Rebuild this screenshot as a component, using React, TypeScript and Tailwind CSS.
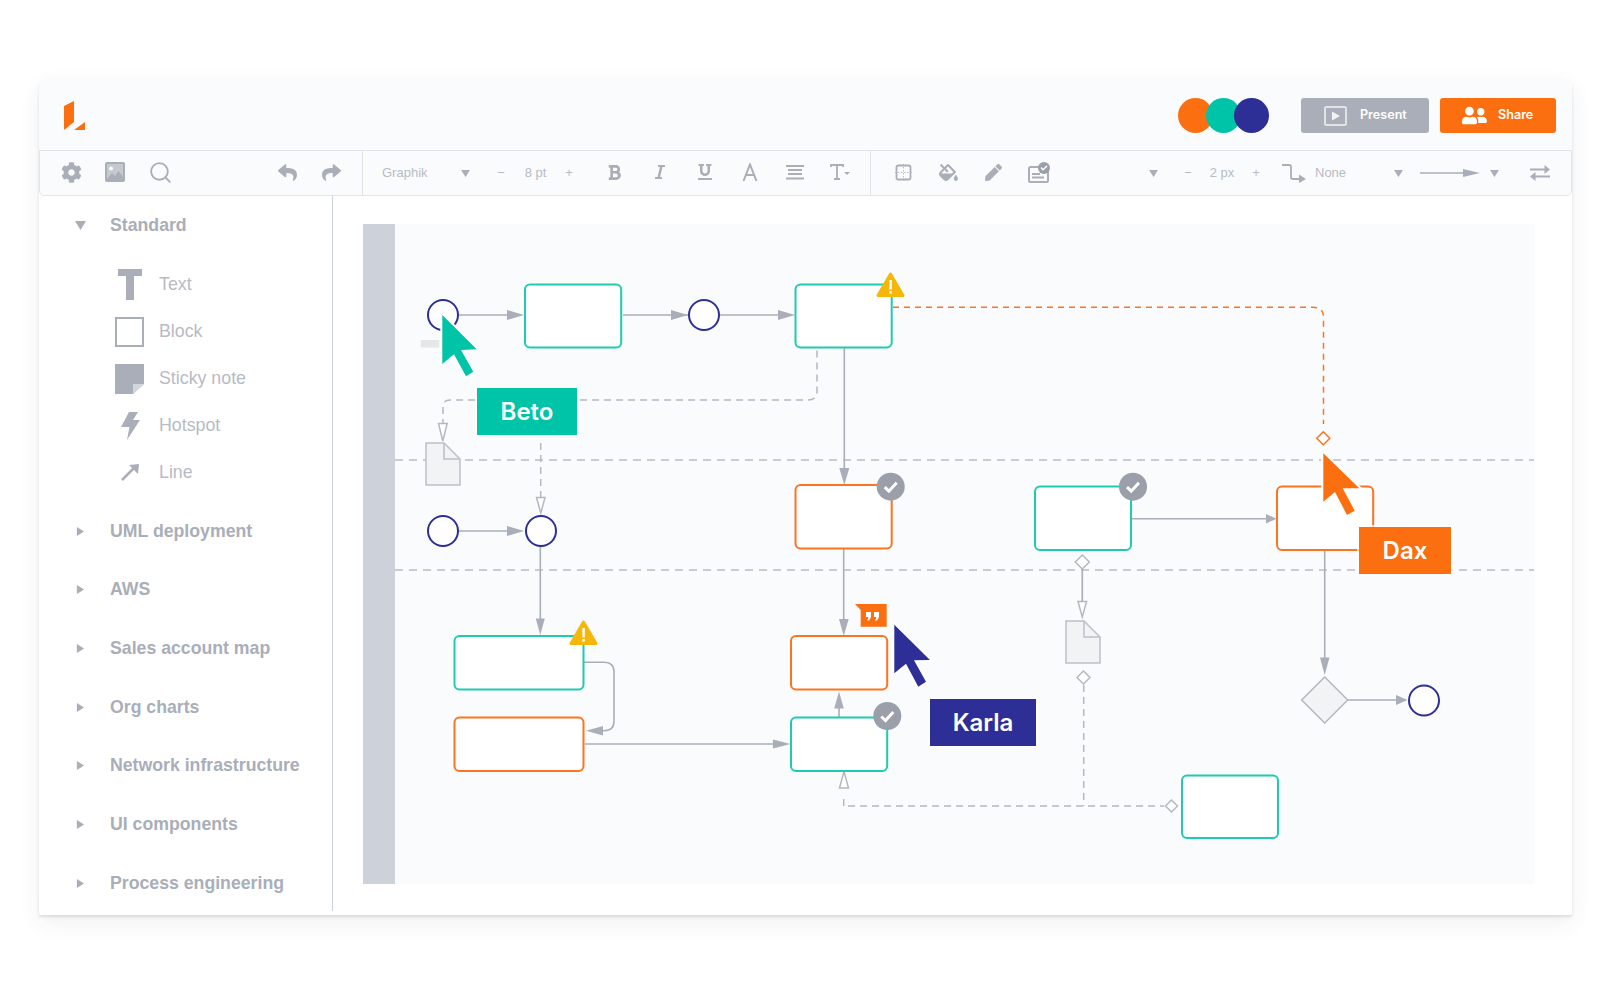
import React from 'react';
import { FaBold, FaCheck, FaCog, FaItalic, FaPen, FaReply, FaShare, FaUnderline, FaUserFriends, FaFillDrip } from 'react-icons/fa';
import { Search } from 'lucide-react';

const TEAL = '#1fcbb0';
const ORANGE = '#fb7420';
const NAVY = '#2d2f96';
const GRAY = '#a9aeb8';

const collapsed = ['UML deployment', 'AWS', 'Sales account map', 'Org charts', 'Network infrastructure', 'UI components', 'Process engineering'];

const rects = [
  { x: 525, y: 284.5, w: 96.2, h: 63, c: TEAL },
  { x: 795.5, y: 284.5, w: 96.2, h: 63, c: TEAL },
  { x: 795.5, y: 485, w: 96.2, h: 63.5, c: ORANGE },
  { x: 791, y: 636, w: 96.2, h: 53.5, c: ORANGE },
  { x: 791, y: 717.5, w: 96.2, h: 53.5, c: TEAL },
  { x: 1035, y: 486.5, w: 96, h: 63.5, c: TEAL },
  { x: 1277, y: 486.5, w: 96.2, h: 63.5, c: ORANGE },
  { x: 1182, y: 775.5, w: 96, h: 62.5, c: TEAL },
  { x: 454.5, y: 636, w: 129, h: 53.5, c: TEAL },
  { x: 454.5, y: 717.5, w: 129, h: 53.5, c: ORANGE },
];

const circles = [
  [443, 315],
  [704, 315],
  [443, 531],
  [541, 531],
  [1424, 700.5],
];

const solid = [
  'M459 315H510',
  'M623 315H688',
  'M720 315H780',
  'M844.3 348V470',
  'M458 531H510',
  'M540.3 546V622',
  'M843.7 549V622',
  'M839 708V717',
  'M1132 518.7H1268',
  'M1324.7 550V660',
  'M1347 700H1397',
  'M1082.3 569V603',
  'M584 662.3H604Q614 662.3 614 672V721Q614 730.7 604 730.7H600',
  'M585 744H775',
];

const filledArrows = [
  '524,315 507,310 507,320',
  '688,315 671,310 671,320',
  '795,315 778,310 778,320',
  '844.3,485 839.3,468 849.3,468',
  '524,531 507,526 507,536',
  '540.3,635 535.8,618.5 544.8,618.5',
  '843.7,636 839,619 848.7,619',
  '839,691.5 834.2,708.5 843.8,708.5',
  '790.5,744 773,739.5 773,748.5',
  '1276.5,518.7 1266,514 1266,523.5',
  '1324.7,675 1320,657.5 1329.5,657.5',
  '1407.5,700 1396,695 1396,705',
  '586,730.7 603,726 603,735.5',
];

const hollowArrows = [
  '442.8,441 438.5,423.5 447.2,423.5',
  '540.8,513 536.5,497.5 545,497.5',
  '1082.3,617 1078,601.5 1086.6,601.5',
  '844,771.5 839.5,788 848.5,788',
];

const checks = [
  [890.7, 486.7],
  [887.3, 716],
  [1133, 486.7],
];

const warnings = [
  [890.5, 272],
  [583.5, 620],
];

const Tri = ({ right = false, size = 9 }: { right?: boolean; size?: number }) => (
  <svg width={size} height={size} viewBox="0 0 10 10" className="shrink-0">
    <polygon points={right ? '1,0 9,5 1,10' : '0,1 10,1 5,9'} fill={GRAY} />
  </svg>
);

const Slot = ({ children }: { children: React.ReactNode }) => (
  <div className="w-[45px] shrink-0 flex items-center justify-center pb-[2px] text-[#a9aeb8]">{children}</div>
);

const Warning = ({ x, y }: { x: number; y: number }) => (
  <g transform={`translate(${x} ${y})`}>
    <path d="M14.5 2 L27 23.5 H2 Z" fill="#f4b70a" stroke="#f4b70a" strokeWidth="3" strokeLinejoin="round" />
    <rect x="13.4" y="8" width="2.4" height="9.5" fill="#fff" />
    <rect x="13.4" y="19" width="2.4" height="2.6" fill="#fff" />
  </g>
);

const Doc = ({ x, y }: { x: number; y: number }) => (
  <g transform={`translate(${x} ${y})`}>
    <path d="M0 0H18L34 16V42H0Z" fill="#f2f3f4" stroke="#bcc0c8" strokeWidth="1.5" />
    <path d="M18 0V16H34" fill="none" stroke="#bcc0c8" strokeWidth="1.5" />
  </g>
);

const Diamond = ({ x, y, r = 7, c = '#b4b8c1' }: { x: number; y: number; r?: number; c?: string }) => (
  <polygon points={`${x},${y - r} ${x + r},${y} ${x},${y + r} ${x - r},${y}`} fill="#fff" stroke={c} strokeWidth="1.5" />
);

const Cursor = ({ points, color }: { points: string; color: string }) => (
  <polygon points={points} fill={color} stroke="#fff" strokeWidth="4" strokeLinejoin="miter" paintOrder="stroke" />
);

const Tag = ({ name, className }: { name: string; className: string }) => (
  <div className={`absolute flex items-center justify-center text-white text-[24px] font-semibold font-['Inter',sans-serif] shadow-[0_0_0_2px_rgba(255,255,255,0.7)] ${className}`}>
    {name}
  </div>
);

const Diagram = () => (
  <svg className="absolute inset-0" width="1172" height="660" viewBox="363 224 1172 660" fill="none">
    {/* swim lanes */}
    <path d="M395 460H1534M395 570H1534" stroke="#b9bdc6" strokeWidth="1.5" strokeDasharray="8 6" />

    {/* connectors */}
    <path d="M475 400H450Q443 400 443 407V424M580 400H808Q817 400 817 391V349M540.7 443V498M843.7 806V796M848 806H1164M1083.7 685V806" stroke="#b4b8c1" strokeWidth="1.5" strokeDasharray="7 5" />
    <path d="M893 307.3H1313Q1323.5 307.3 1323.5 317V424" stroke={ORANGE} strokeWidth="1.5" strokeDasharray="6 5" />
    {solid.map((d) => (
      <path key={d} d={d} stroke={GRAY} strokeWidth="1.6" />
    ))}
    {filledArrows.map((p) => (
      <polygon key={p} points={p} fill={GRAY} />
    ))}
    {hollowArrows.map((p) => (
      <polygon key={p} points={p} fill="#fff" stroke="#b4b8c1" strokeWidth="1.5" />
    ))}

    {/* blocks */}
    {rects.map((r) => (
      <rect key={`${r.x}-${r.y}`} x={r.x} y={r.y} width={r.w} height={r.h} rx="5" fill="#fff" stroke={r.c} strokeWidth="2" />
    ))}
    {circles.map(([cx, cy]) => (
      <circle key={`${cx}-${cy}`} cx={cx} cy={cy} r="15" fill="#fff" stroke={NAVY} strokeWidth="2" />
    ))}

    <Doc x={426} y={443} />
    <Doc x={1066} y={621} />
    <Diamond x={1082.3} y={562} />
    <Diamond x={1083.5} y={677.5} r={6.5} />
    <Diamond x={1171.5} y={806} r={6} />
    <Diamond x={1323.3} y={438.3} r={6.5} c={ORANGE} />
    <polygon points="1324.7,677 1347.7,700 1324.7,723 1301.7,700" fill="#f2f3f4" stroke="#b4b8c1" strokeWidth="1.5" />
    <rect x="420.7" y="340" width="18.5" height="7.5" fill="#e6e7e9" />

    {/* badges */}
    {warnings.map(([x, y]) => (
      <Warning key={x} x={x - 14.5} y={y} />
    ))}
    {checks.map(([cx, cy]) => (
      <g key={cx}>
        <circle cx={cx} cy={cy} r="14" fill="#9a9fa9" />
        <path d={`M${cx - 6} ${cy + 0.5}L${cx - 1.8} ${cy + 4.5}L${cx + 6} ${cy - 4}`} stroke="#fff" strokeWidth="3" />
      </g>
    ))}
    <polygon points="855,604 886.7,604 886.7,626.7 860.7,626.7 860.7,610" fill="#fb6f10" />
    <path d="M866 612h5v5l-2 3.500h-2l1.500-3.500h-2.500zM874 612h5v5l-2 3.500h-2l1.500-3.500h-2.500z" fill="#fff" />

    {/* cursors */}
    <Cursor color="#00c4a7" points="442.3,315 476.7,349.3 461,350 473.3,371.7 466,376.300 454,354.300 442.3,364" />
    <Cursor color="#fb6f10" points="1323.3,453.3 1359.3,488.3 1342.7,488.3 1354.7,510.7 1347,515 1335,492 1323.3,501.7" />
    <Cursor color={NAVY} points="894.3,624.7 930,660 914,660.3 926,681.7 918.3,686.7 906,663.7 894.3,673.3" />
  </svg>
);

const App: React.FC = () => {
  return (
    <div className="w-[1600px] h-[1004px] bg-white overflow-hidden pt-[79px] pl-[39px] font-['Liberation_Sans',sans-serif]">
      <div className="w-[1533px] h-[836px] flex flex-col bg-white rounded-t-lg rounded-b-[2px] shadow-[0_2px_3px_rgba(60,65,85,0.14),0_8px_22px_rgba(50,60,80,0.07)]">
        {/* Header */}
        <div className="h-[71px] shrink-0 flex items-center bg-[#fafbfd] rounded-t-lg pl-[25px] pt-[2px]">
          <svg width="22" height="30" viewBox="0 0 22 30">
            <polygon points="0,5 10,0 10,21 0,29" fill="#fb6f10" />
            <polygon points="10,29 21,21 21,29" fill="#fb6f10" />
          </svg>
          <div className="ml-auto flex items-center">
            <div className="w-[35px] h-[35px] rounded-full bg-[#fb6f10]" />
            <div className="w-[35px] h-[35px] rounded-full bg-[#00c4a7] -ml-[7px]" />
            <div className="w-[35px] h-[35px] rounded-full bg-[#2d2f96] -ml-[7px]" />
          </div>
          <button className="ml-[32px] w-[128px] h-[35px] rounded-[3px] bg-[#a9aeb8] flex items-center pl-[23px] text-white text-[12.6px] font-semibold font-['Inter',sans-serif]">
            <svg width="23" height="20" viewBox="0 0 23 20" className="mr-[13px]">
              <rect x="1" y="1" width="21" height="18" rx="1" fill="none" stroke="#fff" strokeWidth="1.5" opacity="0.85" />
              <polygon points="8,5.500 16,10 8,14.500" fill="#fff" opacity="0.85" />
            </svg>
            Present
          </button>
          <button className="ml-[11px] mr-[16px] w-[116px] h-[35px] rounded-[3px] bg-[#fb6f10] flex items-center pl-[22px] text-white text-[12.6px] font-semibold font-['Inter',sans-serif]">
            <FaUserFriends size={25} className="mr-[11px]" />
            Share
          </button>
        </div>

        {/* Toolbar */}
        <div className="h-[46px] shrink-0 flex items-stretch bg-[#fafbfd] border border-[#e1e4e9] rounded-b-[5px] text-[13px] text-[#b7bbc4]">
          <div className="w-[323px] shrink-0 flex items-center border-r border-[#e1e4e9] pl-[9px]">
            <div className="w-[44px] flex justify-center pb-[2px] text-[#a9aeb8]"><FaCog size={21} /></div>
            <div className="w-[44px] flex justify-center pb-[2px]">
              <svg width="20" height="20" viewBox="0 0 20 20">
                <rect width="20" height="20" rx="2" fill={GRAY} />
                <rect x="2" y="2" width="16" height="16" fill="#fafbfd" opacity="0.35" />
                <circle cx="6" cy="6.500" r="2" fill="#fafbfd" />
                <path d="M2 17L7 11L10 14L13.500 9L18 15V18H2Z" fill={GRAY} />
              </svg>
            </div>
            <div className="w-[44px] flex justify-center pb-[2px] text-[#a9aeb8] pl-[2px]"><Search size={25} strokeWidth={1.8} /></div>
            <div className="ml-[84px] w-[44px] flex justify-center pb-[2px] text-[#a9aeb8]"><FaReply size={19} /></div>
            <div className="w-[44px] flex justify-center pb-[2px] text-[#a9aeb8]"><FaShare size={19} /></div>
          </div>

          <div className="w-[508px] shrink-0 flex items-center border-r border-[#e1e4e9] pl-[19px]">
            <span className="w-[79px]">Graphik</span>
            <Tri />
            <span className="ml-[23px] w-[16px] text-center">−</span>
            <span className="ml-[15px] w-[23px] text-center whitespace-nowrap">8 pt</span>
            <span className="ml-[14px] w-[16px] text-center">+</span>
            <div className="ml-[15px] flex items-center">
              <Slot><FaBold size={17} /></Slot>
              <Slot><FaItalic size={16} /></Slot>
              <Slot><FaUnderline size={16} /></Slot>
              <Slot>
                <svg width="16" height="18" viewBox="0 0 16 18" fill="none" stroke={GRAY} strokeWidth="2">
                  <path d="M1.500 18L8 1.500L14.500 18M4 12H12" />
                </svg>
              </Slot>
              <Slot>
                <svg width="18" height="16" viewBox="0 0 18 16" fill="none" stroke={GRAY} strokeWidth="1.800">
                  <path d="M0 2H18M2 6H16M2 10H16M0 14.500H18" />
                </svg>
              </Slot>
              <Slot>
                <svg width="20" height="16" viewBox="0 0 20 16" fill="none" stroke={GRAY} strokeWidth="1.800">
                  <path d="M1 3V1H13V3M7 1V15M4 15H10" />
                  <polygon points="14,8 20,8 17,11" fill={GRAY} stroke="none" />
                </svg>
              </Slot>
            </div>
          </div>

          <div className="flex-1 flex items-center pl-[10px]">
            <Slot>
              <svg width="17" height="17" viewBox="0 0 17 17" fill="none" stroke={GRAY}>
                <rect x="1.500" y="1.500" width="14" height="14" rx="1.500" strokeWidth="1.800" />
                <path d="M8.500 0V17M0 8.500H17" strokeWidth="0.800" strokeDasharray="1.500 1.500" />
              </svg>
            </Slot>
            <Slot><FaFillDrip size={19} /></Slot>
            <Slot><FaPen size={17} /></Slot>
            <Slot>
              <svg width="22" height="21" viewBox="0 0 22 21">
                <rect x="1" y="5" width="19" height="15" rx="1.500" fill="none" stroke={GRAY} strokeWidth="2" />
                <path d="M4 12H12M4 15.500H16" stroke={GRAY} strokeWidth="1.800" />
                <circle cx="16" cy="6" r="6" fill="#9a9fa9" />
                <FaCheck x="12.500" y="2.500" size={7} color="#fff" />
              </svg>
            </Slot>
            <div className="ml-[88px]"><Tri /></div>
            <span className="ml-[22px] w-[16px] text-center">−</span>
            <span className="ml-[12px] w-[28px] text-center whitespace-nowrap">2 px</span>
            <span className="ml-[12px] w-[16px] text-center">+</span>
            <svg width="24" height="20" viewBox="0 0 24 20" fill="none" className="ml-[18px]">
              <path d="M0 2H7Q9 2 9 4V14Q9 16 11 16H18" stroke={GRAY} strokeWidth="1.800" />
              <polygon points="24,16 17,11.500 17,20" fill={GRAY} />
            </svg>
            <span className="ml-[9px] w-[79px]">None</span>
            <Tri />
            <svg width="60" height="12" viewBox="0 0 60 12" className="ml-[17px]">
              <path d="M0 6H45" stroke={GRAY} strokeWidth="1.500" />
              <polygon points="60,6 43,2 43,10" fill={GRAY} />
            </svg>
            <div className="ml-[10px]"><Tri /></div>
            <svg width="20" height="18" viewBox="0 0 20 18" fill="none" className="ml-[31px]">
              <path d="M0 5.500H18M2 12.500H20" stroke={GRAY} strokeWidth="1.800" />
              <polygon points="20,5.500 14.500,1 14.500,10" fill={GRAY} />
              <polygon points="0,12.500 5.500,8 5.500,17" fill={GRAY} />
            </svg>
          </div>
        </div>

        {/* Body */}
        <div className="flex-1 flex min-h-0">
          <div className="w-[294px] shrink-0 h-[715px] border-r border-[#cdd2da] pl-[36px] pt-[18px]">
            <div className="h-[22px] flex items-center">
              <Tri size={11} />
              <span className="ml-[24px] text-[17.7px] font-bold text-[#a9aeb8]">Standard</span>
            </div>
            <div className="mt-[25px] flex flex-col text-[17.8px] text-[#b7bbc4]">
              <div className="h-[47px] flex items-center">
                <div className="w-[84px] pl-[43px]">
                  <svg width="24" height="31" viewBox="0 0 24 31"><path d="M0 0H24V7H16V31H8V7H0Z" fill={GRAY} /></svg>
                </div>
                Text
              </div>
              <div className="h-[47px] flex items-center">
                <div className="w-[84px] pl-[40px]">
                  <div className="w-[29px] h-[30px] border-[2px] border-[#a9aeb8] bg-white" />
                </div>
                Block
              </div>
              <div className="h-[47px] flex items-center">
                <div className="w-[84px] pl-[40px]">
                  <svg width="29" height="30" viewBox="0 0 29 30">
                    <path d="M0 0H29V20L18 30H0Z" fill={GRAY} />
                    <path d="M18 30V20H29Z" fill="#d3d6dc" />
                  </svg>
                </div>
                Sticky note
              </div>
              <div className="h-[47px] flex items-center">
                <div className="w-[84px] pl-[46px]">
                  <svg width="19" height="28" viewBox="0 0 19 28"><path d="M8 0H17L12 8H19L6 28L8.500 15H0Z" fill={GRAY} /></svg>
                </div>
                Hotspot
              </div>
              <div className="h-[47px] flex items-center">
                <div className="w-[84px] pl-[46px]">
                  <svg width="18" height="17" viewBox="0 0 18 17" fill="none">
                    <path d="M1 16L14 3" stroke={GRAY} strokeWidth="2.500" />
                    <polygon points="18,0 8,1 17,10" fill={GRAY} />
                  </svg>
                </div>
                Line
              </div>
            </div>
            <div className="mt-[24px] flex flex-col gap-[36.700px]">
              {collapsed.map((name) => (
                <div key={name} className="h-[22px] flex items-center">
                  <div className="w-[11px] pl-[1px]"><Tri right /></div>
                  <span className="ml-[24px] text-[17.7px] font-bold text-[#a9aeb8] whitespace-nowrap">{name}</span>
                </div>
              ))}
            </div>
          </div>

          {/* Canvas */}
          <div className="flex-1 pl-[30px] pt-[28px]">
            <div className="relative w-[1172px] h-[660px] bg-[#fafbfd] flex">
              <div className="w-[32px] h-full bg-[#cdd2da]" />
              <Diagram />
              <Tag name="Beto" className="left-[114px] top-[164px] w-[100px] h-[47px] bg-[#00c4a7]" />
              <Tag name="Dax" className="left-[996px] top-[303px] w-[92px] h-[47px] bg-[#fb6f10]" />
              <Tag name="Karla" className="left-[567px] top-[475px] w-[106px] h-[47px] bg-[#2d2f96]" />
            </div>
          </div>
        </div>
      </div>
    </div>
  );
};

export default App;
